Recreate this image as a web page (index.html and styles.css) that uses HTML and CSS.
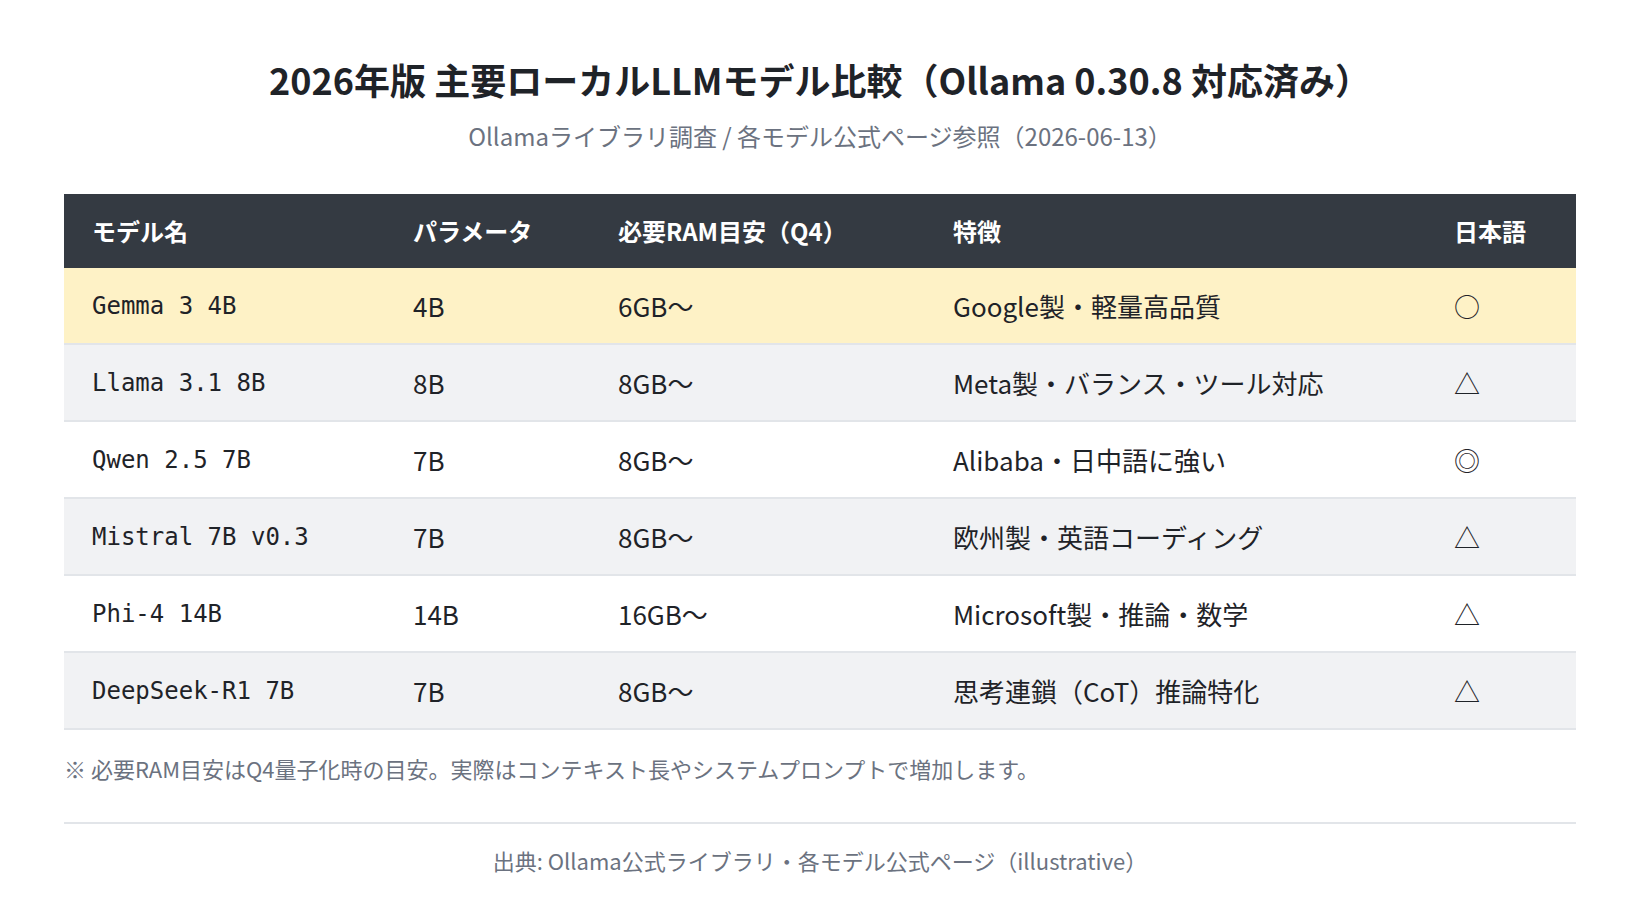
FILE: index.html
```html
<!DOCTYPE html>
<html lang="ja">
<head>
<meta charset="utf-8">
<title>2026年版 主要ローカルLLMモデル比較</title>
<link rel="stylesheet" href="styles.css">
</head>
<body>
<main class="page">
  <header class="heading">
    <h1 class="title">2026年版 主要ローカルLLMモデル比較（Ollama 0.30.8 対応済み）</h1>
    <p class="subtitle">Ollamaライブラリ調査 / 各モデル公式ページ参照（2026-06-13）</p>
  </header>
  <table class="models">
    <colgroup>
      <col class="c-name">
      <col class="c-param">
      <col class="c-ram">
      <col class="c-feat">
      <col class="c-ja">
    </colgroup>
    <thead>
      <tr>
        <th>モデル名</th>
        <th>パラメータ</th>
        <th>必要RAM目安（Q4）</th>
        <th>特徴</th>
        <th>日本語</th>
      </tr>
    </thead>
    <tbody>
      <tr class="hl">
        <td class="mono">Gemma 3 4B</td>
        <td>4B</td>
        <td>6GB〜</td>
        <td>Google製・軽量高品質</td>
        <td>○</td>
      </tr>
      <tr class="alt">
        <td class="mono">Llama 3.1 8B</td>
        <td>8B</td>
        <td>8GB〜</td>
        <td>Meta製・バランス・ツール対応</td>
        <td>△</td>
      </tr>
      <tr>
        <td class="mono">Qwen 2.5 7B</td>
        <td>7B</td>
        <td>8GB〜</td>
        <td>Alibaba・日中語に強い</td>
        <td>◎</td>
      </tr>
      <tr class="alt">
        <td class="mono">Mistral 7B v0.3</td>
        <td>7B</td>
        <td>8GB〜</td>
        <td>欧州製・英語コーディング</td>
        <td>△</td>
      </tr>
      <tr>
        <td class="mono">Phi-4 14B</td>
        <td>14B</td>
        <td>16GB〜</td>
        <td>Microsoft製・推論・数学</td>
        <td>△</td>
      </tr>
      <tr class="alt">
        <td class="mono">DeepSeek-R1 7B</td>
        <td>7B</td>
        <td>8GB〜</td>
        <td>思考連鎖（CoT）推論特化</td>
        <td>△</td>
      </tr>
    </tbody>
  </table>
  <p class="note">※ 必要RAM目安はQ4量子化時の目安。実際はコンテキスト長やシステムプロンプトで増加します。</p>
  <footer class="source">出典: Ollama公式ライブラリ・各モデル公式ページ（illustrative）</footer>
</main>
</body>
</html>
```
FILE: styles.css
```css
html, body {
  margin: 0;
  padding: 0;
  background: #ffffff;
}

body {
  font-family: "Noto Sans CJK JP", "Noto Sans", sans-serif;
  color: #1f2328;
}

.page {
  padding: 56px 64px 0;
}

.heading {
  text-align: center;
}

.title {
  margin: 0;
  font-size: 36px;
  line-height: 47px;
  font-weight: 700;
  color: #1f2328;
}

.subtitle {
  margin: 16px 0 0;
  font-size: 24px;
  line-height: 34px;
  color: #6b7280;
}

.models {
  margin-top: 41px;
  width: 100%;
  border-collapse: collapse;
  table-layout: fixed;
}

.c-name { width: 321px; }
.c-param { width: 205px; }
.c-ram { width: 335px; }
.c-feat { width: 501px; }
.c-ja { width: 150px; }

.models th {
  background: #343a42;
  color: #ffffff;
  font-size: 24px;
  font-weight: 700;
  line-height: 36px;
  padding: 19px 28px;
  text-align: left;
}

.models td {
  font-size: 26px;
  line-height: 39px;
  padding: 18px 28px;
  text-align: left;
  vertical-align: middle;
  border-bottom: 2px solid #e2e5e9;
  color: #1f2328;
  white-space: nowrap;
}

.models td.mono {
  font-family: "DejaVu Sans Mono", monospace;
  font-size: 24px;
  padding-top: 19px;
  padding-bottom: 17px;
}

.models tr.hl td {
  background: #fef2c6;
}

.models tr.alt td {
  background: #f1f2f4;
}

.note {
  margin: 22px 0 0;
  font-size: 22px;
  line-height: 33px;
  color: #6b7280;
  padding-bottom: 37px;
  border-bottom: 2px solid #e2e5e9;
}

.source {
  margin-top: 20px;
  text-align: center;
  font-size: 22px;
  line-height: 33px;
  color: #6b7280;
}
```
